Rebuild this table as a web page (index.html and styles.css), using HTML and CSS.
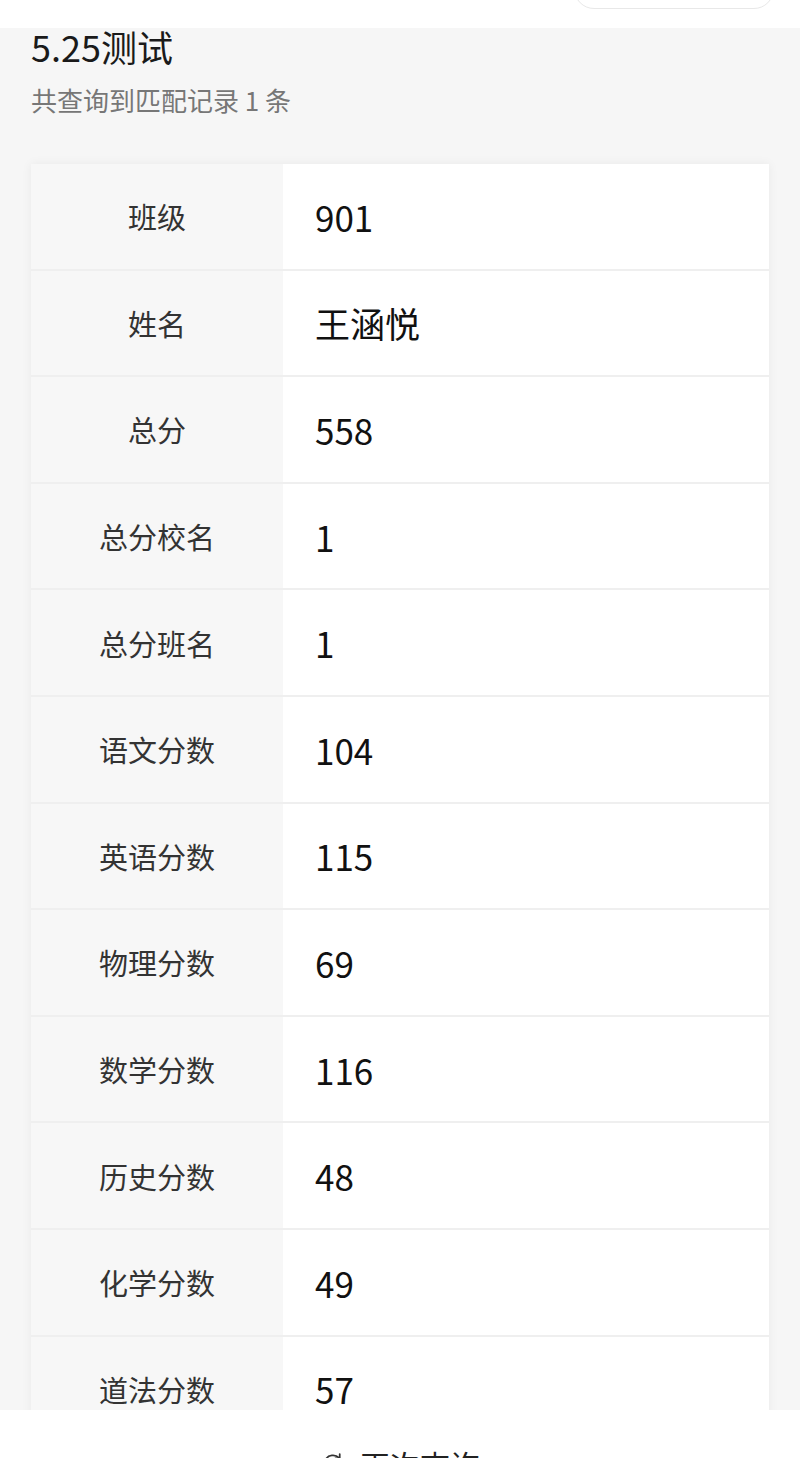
FILE: index.html
```html
<!DOCTYPE html>
<html lang="zh-CN">
<head>
<meta charset="utf-8">
<title>5.25测试</title>
<link rel="stylesheet" href="styles.css">
</head>
<body>
<div class="page">
  <header class="topbar">
    <div class="pill"></div>
  </header>
  <main class="content">
    <h1 class="title">5.25测试</h1>
    <p class="summary">共查询到匹配记录 1 条</p>
    <div class="card">
      <div class="row"><div class="label">班级</div><div class="value">901</div></div>
      <div class="row"><div class="label">姓名</div><div class="value">王涵悦</div></div>
      <div class="row"><div class="label">总分</div><div class="value">558</div></div>
      <div class="row"><div class="label">总分校名</div><div class="value">1</div></div>
      <div class="row"><div class="label">总分班名</div><div class="value">1</div></div>
      <div class="row"><div class="label">语文分数</div><div class="value">104</div></div>
      <div class="row"><div class="label">英语分数</div><div class="value">115</div></div>
      <div class="row"><div class="label">物理分数</div><div class="value">69</div></div>
      <div class="row"><div class="label">数学分数</div><div class="value">116</div></div>
      <div class="row"><div class="label">历史分数</div><div class="value">48</div></div>
      <div class="row"><div class="label">化学分数</div><div class="value">49</div></div>
      <div class="row"><div class="label">道法分数</div><div class="value">57</div></div>
    </div>
  </main>
  <footer class="bottombar">
    <button class="again">
      <svg class="icon" viewBox="0 0 24 24" width="26" height="26" aria-hidden="true">
        <path d="M20 12a8 8 0 1 1-2.34-5.66" fill="none" stroke="#333" stroke-width="1.6" stroke-linecap="round"/>
        <path d="M18.2 2.8v4h-4" fill="none" stroke="#333" stroke-width="1.6" stroke-linecap="round" stroke-linejoin="round"/>
      </svg>
      <span>再次查询</span>
    </button>
  </footer>
</div>
</body>
</html>
```

FILE: styles.css
```css
* { box-sizing: border-box; }
html, body { margin: 0; padding: 0; }
body {
  background: #f6f6f6;
  font-family: "Noto Sans CJK SC", "Noto Sans", sans-serif;
  color: #222;
}
.page {
  width: 800px;
  height: 1458px;
  display: flex;
  flex-direction: column;
  overflow: hidden;
}
.topbar {
  height: 28px;
  flex: none;
  background: #fff;
  display: flex;
  justify-content: flex-end;
  padding-right: 26px;
  overflow: hidden;
}
.pill {
  width: 200px;
  height: 40px;
  margin-top: -31px;
  border: 1.5px solid #e8e8e8;
  border-radius: 20px;
  background: #fff;
}
.content {
  flex: 1;
  overflow: hidden;
  padding: 0 31px;
}
.title {
  margin: -3px 0 0;
  font-size: 36px;
  font-weight: 400;
  line-height: 42px;
  color: #1a1a1a;
}
.summary {
  margin: 16px 0 0;
  font-size: 26px;
  line-height: 34px;
  color: #777;
}
.card {
  margin-top: 47px;
  width: 738px;
  background: #fff;
  box-shadow: 0 0 10px rgba(0,0,0,0.06);
}
.row {
  display: flex;
  height: 106.6px;
  border-bottom: 2px solid #efefef;
}
.label {
  width: 252px;
  flex: none;
  background: #f7f7f7;
  display: flex;
  align-items: center;
  justify-content: center;
  font-size: 29px;
  color: #333;
}
.value {
  flex: 1;
  display: flex;
  align-items: center;
  padding-left: 32px;
  font-size: 35px;
  color: #111;
}
.bottombar {
  height: 48px;
  flex: none;
  background: #fff;
  display: flex;
  justify-content: center;
  overflow: hidden;
}
.again {
  margin-top: 34px;
  height: 40px;
  padding: 0;
  border: none;
  background: transparent;
  display: flex;
  align-items: center;
  gap: 14px;
  font-family: inherit;
  font-size: 30px;
  color: #222;
}
.icon { flex: none; }
```
